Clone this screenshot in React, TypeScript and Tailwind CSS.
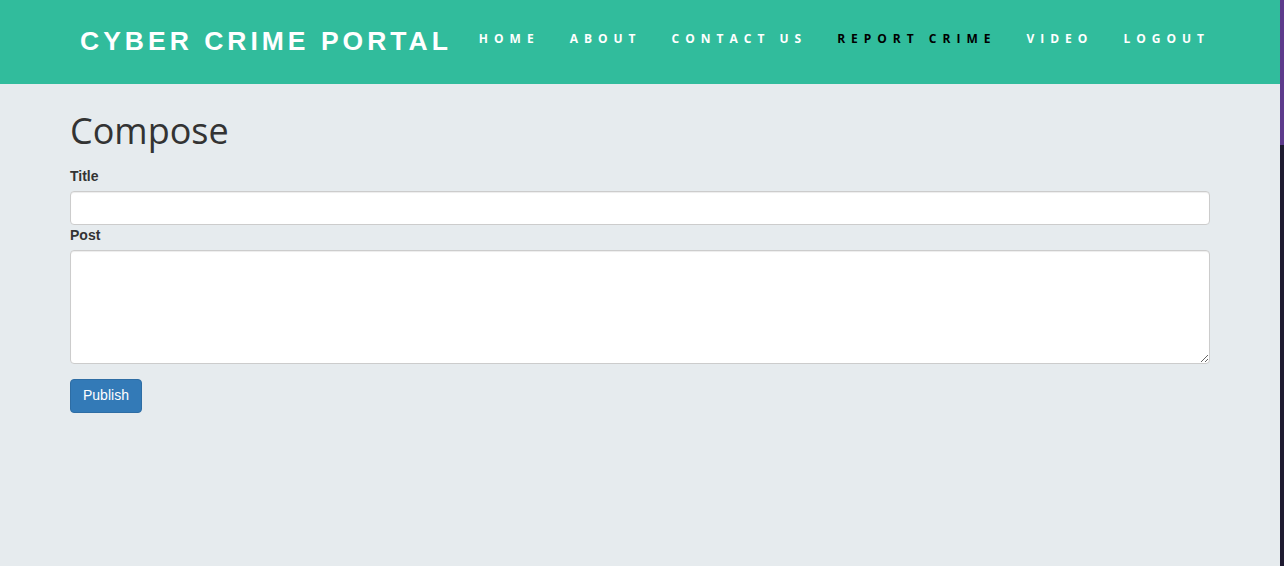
export default function App() {
  const links = ["Home", "About", "Contact Us", "Report Crime", "Video", "Logout"];

  return (
    <div className="flex w-[1284px] h-[566px] overflow-hidden">
      <div className="w-[1280px] bg-[#e6ebee] font-['Liberation_Sans',Arial,sans-serif]">
        <header className="h-[84px] bg-[#31bc9c] flex items-center">
          <div className="pl-[80px] pr-[15px] text-white text-[26.5px] font-bold tracking-[4px] leading-none -mt-[2px]">
            CYBER CRIME PORTAL
          </div>
          <nav className="flex items-center gap-[30px] ml-[12px] -mt-[7px]">
            {links.map((l) => (
              <a
                key={l}
                href="#"
                className={
                  "uppercase text-[12px] font-bold tracking-[6px] font-['Open_Sans',sans-serif] " +
                  (l === "Report Crime" ? "text-black" : "text-white")
                }
              >
                {l}
              </a>
            ))}
          </nav>
        </header>

        <main className="px-[70px]">
          <h1 className="pt-[27px] mb-[15px] text-[36px] leading-[1.1] text-[#333] font-['Open_Sans',sans-serif]">
            Compose
          </h1>
          <form className="flex flex-col">
            <label className="text-[14px] font-bold text-[#333] leading-[20px] mb-[5px]">Title</label>
            <input
              type="text"
              className="h-[34px] bg-white border border-[#ccc] rounded-[4px] shadow-[inset_0_1px_1px_rgba(0,0,0,0.075)] px-3 text-[14px] outline-none"
            />
            <label className="text-[14px] font-bold text-[#333] leading-[20px] mb-[5px]">Post</label>
            <textarea className="h-[114px] bg-white border border-[#ccc] rounded-[4px] shadow-[inset_0_1px_1px_rgba(0,0,0,0.075)] px-3 py-1.5 text-[14px] outline-none" />
            <div className="mt-[15px]">
              <button
                type="button"
                className="h-[34px] px-[12px] bg-[#337ab7] border border-[#2e6da4] rounded-[4px] text-white text-[14px]"
              >
                Publish
              </button>
            </div>
          </form>
        </main>
      </div>
      <div className="w-[4px] flex flex-col">
        <div className="h-[145px] bg-[#5d3a8c]" />
        <div className="flex-1 bg-[#1e1a30]" />
      </div>
    </div>
  );
}
